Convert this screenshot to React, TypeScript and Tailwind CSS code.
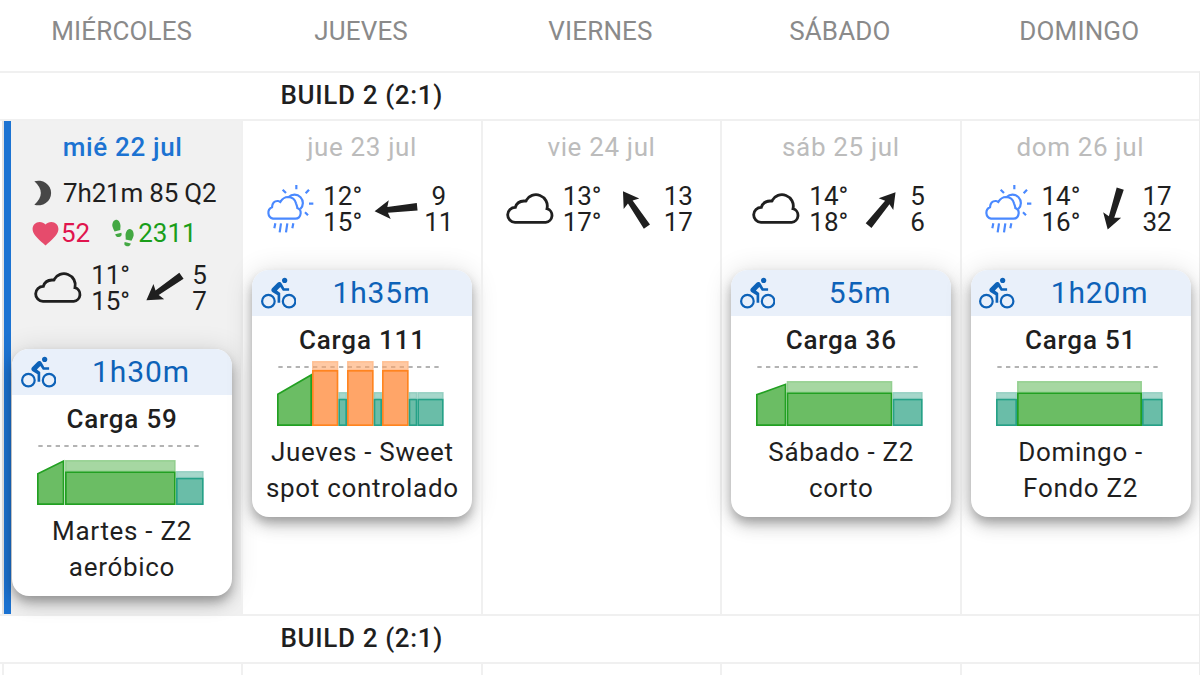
import type { ReactNode } from 'react';
import { clsx } from 'clsx';

// ─── Types ────────────────────────────────────────────────────────────────────

type Zone = 'endurance' | 'recovery' | 'sweetspot';

interface Step {
  zone: Zone;
  x: number;
  width: number;
  /** Top of the solid block. */
  top: number;
  /** Top of the lighter target range above the block. */
  rangeTop: number;
}

interface Ramp {
  width: number;
  from: number;
  to: number;
}

interface Workout {
  duration: string;
  load: number;
  title: [string, string];
  ramp?: Ramp;
  steps: Step[];
}

interface Weather {
  icon: 'cloud' | 'rain';
  temps: [string, string];
  /** Degrees clockwise from north, direction of the arrow tip. */
  windAngle: number;
  wind: [number, number];
}

interface Day {
  name: string;
  date: string;
  today?: boolean;
  weather: Weather;
  workout?: Workout;
}

// ─── Data ─────────────────────────────────────────────────────────────────────

const ZONE_COLORS: Record<Zone, { fill: string; stroke: string }> = {
  endurance: { fill: '#6bbd64', stroke: '#22a022' },
  recovery: { fill: '#6abda8', stroke: '#26a187' },
  sweetspot: { fill: '#ffa568', stroke: '#ff8420' },
};

const DAYS: Day[] = [
  {
    name: 'MIÉRCOLES',
    date: 'mié 22 jul',
    today: true,
    weather: { icon: 'cloud', temps: ['11°', '15°'], windAngle: 235, wind: [5, 7] },
    workout: {
      duration: '1h30m',
      load: 59,
      title: ['Martes - Z2', 'aeróbico'],
      ramp: { width: 82, from: 104, to: 64 },
      steps: [
        { zone: 'endurance', x: 84, width: 332, top: 97, rangeTop: 63 },
        { zone: 'recovery', x: 417, width: 83, top: 116, rangeTop: 96 },
      ],
    },
  },
  {
    name: 'JUEVES',
    date: 'jue 23 jul',
    weather: { icon: 'rain', temps: ['12°', '15°'], windAngle: 264, wind: [9, 11] },
    workout: {
      duration: '1h35m',
      load: 111,
      title: ['Jueves - Sweet', 'spot controlado'],
      ramp: { width: 105, from: 103, to: 43 },
      steps: [
        { zone: 'sweetspot', x: 105, width: 79, top: 30, rangeTop: 3 },
        { zone: 'recovery', x: 184, width: 26, top: 116, rangeTop: 96 },
        { zone: 'sweetspot', x: 210, width: 80, top: 30, rangeTop: 3 },
        { zone: 'recovery', x: 290, width: 25, top: 116, rangeTop: 96 },
        { zone: 'sweetspot', x: 315, width: 80, top: 30, rangeTop: 3 },
        { zone: 'recovery', x: 395, width: 26, top: 116, rangeTop: 96 },
        { zone: 'recovery', x: 421, width: 79, top: 116, rangeTop: 96 },
      ],
    },
  },
  {
    name: 'VIERNES',
    date: 'vie 24 jul',
    weather: { icon: 'cloud', temps: ['13°', '17°'], windAngle: 326, wind: [13, 17] },
  },
  {
    name: 'SÁBADO',
    date: 'sáb 25 jul',
    weather: { icon: 'cloud', temps: ['14°', '18°'], windAngle: 39, wind: [5, 6] },
    workout: {
      duration: '55m',
      load: 36,
      title: ['Sábado - Z2', 'corto'],
      ramp: { width: 91, from: 104, to: 71 },
      steps: [
        { zone: 'endurance', x: 92, width: 317, top: 97, rangeTop: 63 },
        { zone: 'recovery', x: 410, width: 90, top: 116, rangeTop: 96 },
      ],
    },
  },
  {
    name: 'DOMINGO',
    date: 'dom 26 jul',
    weather: { icon: 'rain', temps: ['14°', '16°'], windAngle: 197, wind: [17, 32] },
    workout: {
      duration: '1h20m',
      load: 51,
      title: ['Domingo -', 'Fondo Z2'],
      steps: [
        { zone: 'recovery', x: 0, width: 63, top: 116, rangeTop: 96 },
        { zone: 'endurance', x: 63, width: 375, top: 97, rangeTop: 63 },
        { zone: 'recovery', x: 438, width: 62, top: 116, rangeTop: 96 },
      ],
    },
  },
];

// ─── Icons ────────────────────────────────────────────────────────────────────

function MdiIcon({ path, className }: { path: string; className?: string }) {
  return (
    <svg viewBox="0 0 24 24" fill="currentColor" className={clsx('shrink-0', className)}>
      <path d={path} />
    </svg>
  );
}

const BIKE =
  'M5,20.5A3.5,3.5 0 0,1 1.5,17A3.5,3.5 0 0,1 5,13.5A3.5,3.5 0 0,1 8.5,17A3.5,3.5 0 0,1 5,20.5M5,12A5,5 0 0,0 0,17A5,5 0 0,0 5,22A5,5 0 0,0 10,17A5,5 0 0,0 5,12M14.8,10H19V8.2H15.8L13.86,4.93C13.57,4.43 13,4.1 12.4,4.1C11.93,4.1 11.5,4.29 11.2,4.6L7.5,8.29C7.19,8.6 7,9 7,9.5C7,10.13 7.33,10.66 7.85,10.97L11.2,13V18H13V11.5L10.75,9.85L13.07,7.5M19,20.5A3.5,3.5 0 0,1 15.5,17A3.5,3.5 0 0,1 19,13.5A3.5,3.5 0 0,1 22.5,17A3.5,3.5 0 0,1 19,20.5M19,12A5,5 0 0,0 14,17A5,5 0 0,0 19,22A5,5 0 0,0 24,17A5,5 0 0,0 19,12M16,4.8C17,4.8 17.8,4 17.8,3C17.8,2 17,1.2 16,1.2C15,1.2 14.2,2 14.2,3C14.2,4 15,4.8 16,4.8Z';
const HEART =
  'M12,21.35L10.55,20.03C5.4,15.36 2,12.27 2,8.5C2,5.41 4.42,3 7.5,3C9.24,3 10.91,3.81 12,5.08C13.09,3.81 14.76,3 16.5,3C19.58,3 22,5.41 22,8.5C22,12.27 18.6,15.36 13.45,20.03L12,21.35Z';
const STEPS =
  'M10.74,11.72C11.21,12.95 11.16,14.23 9.75,14.74C6.85,15.81 6.2,13 6.16,12.86L10.74,11.72M5.71,10.91L10.03,9.84C9.84,8.79 10.13,7.74 10.13,6.5C10.13,4.82 8.8,1.53 6.68,2.06C4.26,2.66 3.91,5.35 4,6.65C4.12,7.95 5.64,10.73 5.71,10.91M17.85,19.85C17.82,20 17.16,22.8 14.26,21.74C12.86,21.22 12.8,19.94 13.27,18.71L17.85,19.85M20,13.65C20.1,12.35 19.76,9.65 17.33,9.05C15.22,8.5 13.89,11.81 13.89,13.5C13.89,14.73 14.17,15.78 13.97,16.84L18.3,17.9C18.37,17.72 19.89,14.95 20,13.65Z';

function MoonIcon() {
  return (
    <svg viewBox="0 0 60 78" className="h-[26px] w-5 shrink-0">
      <path d="M1 4A38 37 0 1 1 1 74Q40 39 1 4Z" fill="#474747" />
    </svg>
  );
}

function CloudIcon() {
  return (
    <svg viewBox="0 0 144 150" fill="none" stroke="#1f1f1f" strokeWidth="8.5" className="h-[50px] w-12 shrink-0">
      <path d="M27 115A22 22 0 0 1 28 70Q33 52 54 51Q62 52 60 50A34 34 0 0 1 123 74A21 21 0 0 1 119 115Z" />
    </svg>
  );
}

function RainIcon() {
  return (
    <svg
      viewBox="0 0 144 150"
      fill="none"
      stroke="#4a89ff"
      strokeWidth="6.5"
      strokeLinecap="butt"
      className="h-[50px] w-12 shrink-0"
    >
      <path d="M21 104A18 18 0 0 1 18 70Q19 50 36 51Q40 52 43 54Q52 39 66 39Q86 40 90 58Q94 68 94 72Q105 76 104 88Q102 104 88 104Z" />
      <path d="M68 39A25 25 0 1 1 103 75" />
      <path d="M91 3V16M50 17L60 27M129 17L119 28M129 59H142M117 85L126 94" />
      <path d="M28 118L25 133M45 118L41 145M64 118L60 145M82 118L79 133" />
    </svg>
  );
}

function WindArrow({ angle }: { angle: number }) {
  return (
    <svg viewBox="-22 -22 44 44" className="size-11 shrink-0">
      <path
        d="M0 -21.5L9.4 -6.3L2.8 -8.4L3.7 21.3H-3.7L-2.8 -8.4L-9.4 -6.3Z"
        fill="#1f1f1f"
        transform={`rotate(${angle})`}
      />
    </svg>
  );
}

// ─── Workout card ─────────────────────────────────────────────────────────────

function WorkoutChart({ ramp, steps }: { ramp?: Ramp; steps: Step[] }) {
  const green = ZONE_COLORS.endurance;
  return (
    <svg viewBox="0 0 501 198" className="ml-[25px] h-[66px] w-[167px]">
      <line x1="4" y1="21" x2="492" y2="21" stroke="#b3b3b3" strokeWidth="6" strokeDasharray="13 13" />
      {ramp && (
        <path
          d={`M2.5 195.5V${ramp.from}L${ramp.width - 2.5} ${ramp.to + 2}V195.5Z`}
          fill={green.fill}
          stroke={green.stroke}
          strokeWidth="5"
        />
      )}
      {steps.map((s) => {
        const { fill, stroke } = ZONE_COLORS[s.zone];
        return (
          <g key={s.x}>
            <rect x={s.x} y={s.rangeTop} width={s.width} height={s.top - s.rangeTop} fill={fill} opacity="0.6" />
            <rect
              x={s.x + 3}
              y={s.rangeTop + 3}
              width={s.width - 6}
              height={s.top - s.rangeTop - 4}
              fill="none"
              stroke={stroke}
              strokeWidth="3"
              opacity="0.16"
            />
            <rect
              x={s.x + 2.5}
              y={s.top + 2.5}
              width={s.width - 5}
              height={193 - s.top}
              fill={fill}
              stroke={stroke}
              strokeWidth="5"
            />
          </g>
        );
      })}
    </svg>
  );
}

function WorkoutCard({ workout, className }: { workout: Workout; className?: string }) {
  return (
    <div
      className={clsx(
        'h-[247px] w-[220px] overflow-hidden rounded-[17px] bg-white shadow-[0_6px_10px_-1px_rgba(0,0,0,0.22),0_9px_16px_0_rgba(0,0,0,0.14),0_2px_28px_0_rgba(0,0,0,0.14)]',
        className,
      )}
    >
      <div className="flex h-[46px] items-center bg-[#e9f0fa] pr-[6px] pl-[8.5px] text-[#0d62b8]">
        <MdiIcon path={BIKE} className="mt-[2px] size-[35.5px]" />
        <span className="flex-1 text-center text-[30px] leading-[46px] tracking-[0.9px]">{workout.duration}</span>
      </div>
      <p className="mt-[11px] text-center font-medium tracking-[0.8px]">Carga {workout.load}</p>
      <div className="mt-[7px]">
        <WorkoutChart ramp={workout.ramp} steps={workout.steps} />
      </div>
      <p className="mt-2 text-center leading-9 tracking-[0.7px]">
        {workout.title[0]}
        <br />
        {workout.title[1]}
      </p>
    </div>
  );
}

// ─── Day cells ────────────────────────────────────────────────────────────────

function WeatherRow({ weather }: { weather: Weather }) {
  return (
    <div className="flex items-center justify-center pr-[4.5px]">
      {weather.icon === 'cloud' ? <CloudIcon /> : <RainIcon />}
      <div className="ml-[9px] w-[38px] text-center">
        <p>{weather.temps[0]}</p>
        <p>{weather.temps[1]}</p>
      </div>
      <div className="ml-[12.5px]">
        <WindArrow angle={weather.windAngle} />
      </div>
      <div className="ml-[6.5px] text-center">
        <p>{weather.wind[0]}</p>
        <p>{weather.wind[1]}</p>
      </div>
    </div>
  );
}

function Wellness() {
  return (
    <div className="mt-[13px] mb-[9px] pl-[30px]">
      <div className="flex h-10 items-center gap-[6px] tracking-[-0.15px]">
        <MoonIcon />
        <span className="ml-[3px]">7h21m</span>
        <span>85</span>
        <span>Q2</span>
      </div>
      <div className="flex h-10 items-center">
        <MdiIcon path={HEART} className="-ml-1 size-[31px] text-[#e64b6c]" />
        <span className="text-[#e0154d]">52</span>
        <MdiIcon path={STEPS} className="ml-[17px] size-8 text-[#43a843]" />
        <span className="-ml-px text-[#1a9e1a]">2311</span>
      </div>
    </div>
  );
}

function DayCell({ day }: { day: Day }) {
  return (
    <div
      className={clsx(
        'h-[493px] border-l-2',
        day.today ? 'border-[#e2e2e2] bg-[#f1f1f1]' : 'border-[#f0f0f0]',
      )}
    >
      <div className={clsx('h-full', day.today && 'border-l-[7px] border-[#1c73d2]')}>
        <div className={clsx('pt-[13px]', day.today && '-ml-[7px]')}>
          <p
            className={clsx(
              'text-center tracking-[0.65px]',
              day.today ? 'font-medium text-[#1c73d2]' : 'text-[#bcbcbc]',
            )}
          >
            {day.date}
          </p>
          {day.today ? <Wellness /> : <div className="h-[23px]" />}
          <WeatherRow weather={day.weather} />
          {day.workout && (
            <div className="mt-[35px]">
              <WorkoutCard workout={day.workout} className={day.today ? 'ml-[8px]' : 'ml-[9px]'} />
            </div>
          )}
        </div>
      </div>
    </div>
  );
}

function PhaseRow({ children }: { children: ReactNode }) {
  return (
    <div className="flex h-12 items-center border-t-2 border-[#f0f0f0] pb-0.5 pl-[280.5px] font-medium tracking-[0.65px]">
      {children}
    </div>
  );
}

// ─── Page ─────────────────────────────────────────────────────────────────────

export default function App() {
  return (
    <div className="h-[675px] w-[1200px] overflow-hidden bg-white font-['Roboto',sans-serif] text-[26px] leading-[26px] text-[#1f1f1f]">
      <div className="ml-[2px] grid h-[71px] w-[1197px] grid-cols-5">
        {DAYS.map((day) => (
          <div key={day.name} className="pt-[18px] text-center tracking-[0.15px] text-[#8a8a8a]">
            {day.name}
          </div>
        ))}
      </div>
      <div className="w-[1200px] border-r border-[#ececec]">
        <PhaseRow>BUILD 2 (2:1)</PhaseRow>
        <div className="grid grid-cols-5 border-t-2 border-[#f0f0f0] pl-[2px]">
          {DAYS.map((day) => (
            <DayCell key={day.name} day={day} />
          ))}
        </div>
        <PhaseRow>BUILD 2 (2:1)</PhaseRow>
        <div className="grid grid-cols-5 border-t-2 border-[#f0f0f0] pl-[2px]">
          {DAYS.map((day) => (
            <div key={day.name} className="h-4 border-l-2 border-[#f0f0f0]" />
          ))}
        </div>
      </div>
    </div>
  );
}
